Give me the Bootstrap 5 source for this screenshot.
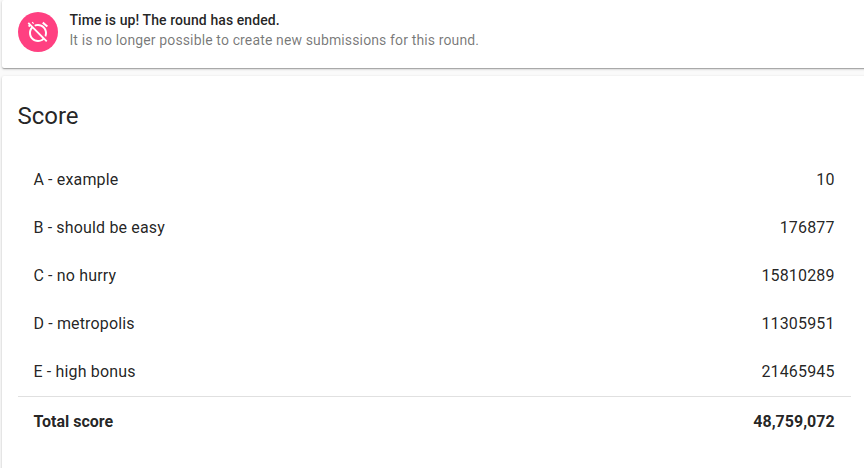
<!DOCTYPE html>
<html lang="en">
<head>
<meta charset="utf-8">
<meta name="viewport" content="width=device-width, initial-scale=1">
<title>Score</title>
<link href="https://cdn.jsdelivr.net/npm/bootstrap@5.3.0/dist/css/bootstrap.min.css" rel="stylesheet">
<style>
body { font-family: Roboto, "Liberation Sans", sans-serif; color: rgba(0,0,0,.87); background: #fafafa; height: 468px; letter-spacing: .01em; }
.panel { background: #fff; border-radius: 2px; margin-left: 2px; margin-right: -8px; box-shadow: 0 1px 3px 0 rgba(0,0,0,.2), 0 1px 1px 0 rgba(0,0,0,.14), 0 2px 1px -1px rgba(0,0,0,.12); }
.notice { height: 68px; padding: 10px 16px 0; font-size: 14px; line-height: 20px; }
.avatar { width: 40px; height: 40px; margin-top: 2px; background: #ff4081; }
.notice-body { margin-left: 11.4px; }
.notice-title { font-weight: 500; letter-spacing: .0065em; }
.notice-text { color: rgba(0,0,0,.54); letter-spacing: .0095em; }
.score-panel { margin-top: 8px; height: 410px; padding: 24px 21px 0 16px; }
.score-title { font-size: 24px; line-height: 32px; font-weight: 400; margin: 0 0 24px -.6px; letter-spacing: 0; }
.score-row { height: 48px; font-size: 16px; padding: 0 16.4px 0 15.4px; }
.score-total { height: 50px; font-weight: 700; letter-spacing: 0; border-top: 1px solid #e0e0e0; }
</style>
<script src="https://cdn.jsdelivr.net/npm/bootstrap@5.3.0/dist/js/bootstrap.bundle.min.js"></script>
</head>
<body class="overflow-hidden">
<section class="panel notice d-flex align-items-start">
  <div class="avatar rounded-circle d-flex align-items-center justify-content-center flex-shrink-0">
    <svg width="24" height="24" viewBox="0 0 24 24" fill="#fff" aria-hidden="true"><path d="M12 6c3.87 0 7 3.13 7 7 0 .84-.16 1.65-.43 2.4l1.52 1.52c.58-1.19.91-2.51.91-3.92 0-4.97-4.03-9-9-9-1.41 0-2.73.33-3.92.91L9.6 6.43C10.35 6.16 11.16 6 12 6zm10-.28l-4.6-3.86-1.29 1.53 4.6 3.86L22 5.72zM2.92 2.29L1.65 3.57 2.98 4.9l-1.11.93 1.42 1.42 1.11-.94.8.8C3.83 8.69 3 10.75 3 13c0 4.97 4.02 9 9 9 2.25 0 4.31-.83 5.89-2.2l2.2 2.2 1.27-1.27L3.89 3.27l-.97-.98zm13.55 16.1C15.26 19.39 13.7 20 12 20c-3.87 0-7-3.13-7-7 0-1.7.61-3.26 1.61-4.47l9.86 9.86zM8.02 3.28L6.6 1.86l-.86.71 1.42 1.42.86-.71z"/></svg>
  </div>
  <div class="notice-body">
    <div class="notice-title">Time is up! The round has ended.</div>
    <div class="notice-text">It is no longer possible to create new submissions for this round.</div>
  </div>
</section>
<section class="panel score-panel">
  <h1 class="score-title">Score</h1>
  <div class="score-row d-flex align-items-center justify-content-between"><span>A - example</span><span>10</span></div>
  <div class="score-row d-flex align-items-center justify-content-between"><span>B - should be easy</span><span>176877</span></div>
  <div class="score-row d-flex align-items-center justify-content-between"><span>C - no hurry</span><span>15810289</span></div>
  <div class="score-row d-flex align-items-center justify-content-between"><span>D - metropolis</span><span>11305951</span></div>
  <div class="score-row d-flex align-items-center justify-content-between"><span>E - high bonus</span><span>21465945</span></div>
  <div class="score-row score-total d-flex align-items-center justify-content-between"><span>Total score</span><span>48,759,072</span></div>
</section>
</body>
</html>
